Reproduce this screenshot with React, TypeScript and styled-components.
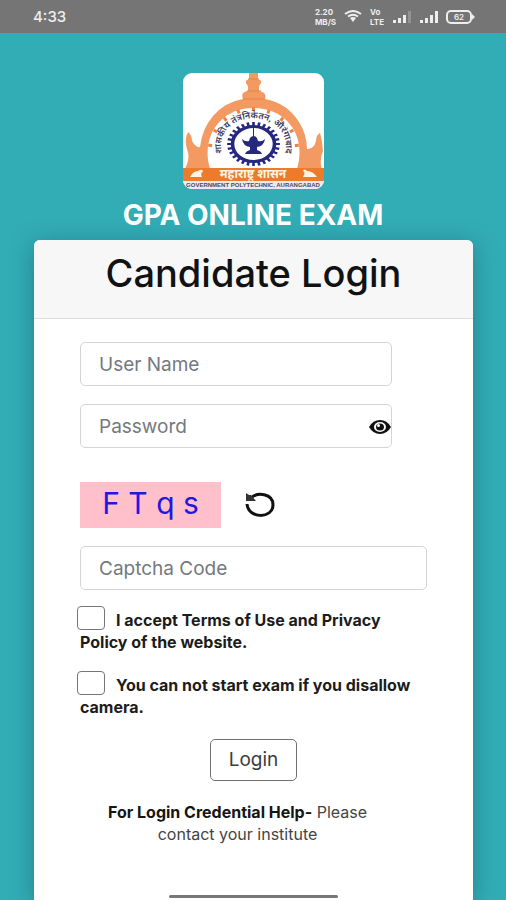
import React, { useState } from "react";
import styled, { createGlobalStyle } from "styled-components";

const GlobalStyle = createGlobalStyle`
  *, *::before, *::after { box-sizing: border-box; }
  body {
    margin: 0;
    background: #32adb6;
    color: #151515;
    font-family: Inter, Roboto, "Liberation Sans", sans-serif;
  }
`;

const Page = styled.div`
  min-height: 100vh;
  display: flex;
  flex-direction: column;
  background: #32adb6;
`;

const StatusBar = styled.div`
  height: 33px;
  padding: 0 31px 0 33px;
  display: flex;
  align-items: center;
  justify-content: space-between;
  background: #757575;
  color: #eeeeee;
`;

const Clock = styled.span`
  font-size: 15px;
  font-weight: 500;
`;

const StatusIcons = styled.div`
  display: flex;
  align-items: center;
  gap: 8px;
`;

const TinyStack = styled.span`
  display: flex;
  flex-direction: column;
  font-size: 8px;
  font-weight: 700;
  line-height: 10px;
`;

const Brand = styled.header`
  padding: 40px 0 7px;
  display: flex;
  flex-direction: column;
  align-items: center;
  gap: 8px;
`;

const BrandName = styled.h1`
  margin: 0;
  font-size: 28px;
  line-height: 36px;
  font-weight: 700;
  color: #fff;
`;

const Card = styled.main`
  flex: 1;
  margin: 0 33px 0 34px;
  display: flex;
  flex-direction: column;
  background: #fff;
  border-radius: 6px 6px 0 0;
  box-shadow: 0 4px 24px rgba(0, 50, 60, 0.35);
`;

const CardHeader = styled.div`
  height: 79px;
  padding-top: 11px;
  border-bottom: 1px solid #dcdcdc;
  border-radius: 6px 6px 0 0;
  background: #f7f7f7;
  text-align: center;
`;

const CardTitle = styled.h2`
  margin: 0;
  font-size: 38px;
  line-height: 44px;
  font-weight: 500;
  color: #101214;
`;

const Form = styled.form`
  padding: 23px 46px 56px;
  display: flex;
  flex-direction: column;
`;

const Field = styled.div<{ $width: string; $gap: number }>`
  position: relative;
  width: ${(p) => p.$width};
  margin-bottom: ${(p) => p.$gap}px;
`;

const TextInput = styled.input`
  display: block;
  width: 100%;
  height: 44px;
  padding: 0 18px;
  border: 1px solid #d3d5d8;
  border-radius: 5px;
  background: #fff;
  color: #212529;
  font: 400 19px/24px Inter, Roboto, sans-serif;
  &::placeholder { color: #74797e; opacity: 1; }
`;

const IconButton = styled.button`
  display: flex;
  padding: 0;
  border: 0;
  background: none;
  color: #111;
  cursor: pointer;
`;

const RevealButton = styled(IconButton)`
  position: absolute;
  right: 1px;
  top: 16px;
`;

const CaptchaRow = styled.div`
  display: flex;
  align-items: center;
  gap: 24px;
  margin-bottom: 18px;
`;

const CaptchaCode = styled.output`
  width: 141px;
  height: 46px;
  padding-bottom: 4px;
  display: flex;
  align-items: center;
  justify-content: center;
  background: #ffc0cb;
  color: #2418e0;
  font-size: 30px;
  white-space: pre;
`;

const Consent = styled.label`
  display: block;
  margin: 0 0 18px;
  font-size: 16px;
  line-height: 22px;
  font-weight: 700;
  color: #1c1c1c;
`;

const CheckBox = styled.input`
  appearance: none;
  width: 28px;
  height: 24px;
  margin: 0 11px 0 -3px;
  border: 1px solid #767676;
  border-radius: 4px;
  background: #fff;
  vertical-align: text-bottom;
  &:checked { background: #2f6fdb; }
`;

const LoginButton = styled.button`
  align-self: center;
  height: 42px;
  margin: 3px 0 20px;
  padding: 0 18px;
  border: 1px solid #6f7275;
  border-radius: 5px;
  background: #fff;
  color: #3a3d40;
  font: 400 19px/24px Inter, Roboto, sans-serif;
`;

const Help = styled.p`
  align-self: center;
  max-width: 306px;
  margin: 0;
  padding-right: 32px;
  text-align: center;
  font-size: 16px;
  line-height: 22px;
  color: #444;
  strong { color: #151515; font-weight: 700; }
`;

const HomeBar = styled.div`
  position: fixed;
  bottom: 2px;
  left: 50%;
  width: 169px;
  height: 3px;
  margin-left: -84px;
  border-radius: 2px;
  background: #777;
`;

const teeth = Array.from({ length: 28 }, (_, i) => (i * 360) / 28);
const rays = [-80, -60, -40, -20, 0, 20, 40, 60, 80];

const Logo = () => (
  <svg width="141" height="116" viewBox="0 0 141 116" role="img" aria-label="Government Polytechnic emblem">
    <defs>
      <clipPath id="plate"><rect width="141" height="116" rx="9" /></clipPath>
      <path id="motto" d="M39 82 C29 33 112 33 102 82" />
    </defs>
    <g clipPath="url(#plate)">
      <rect width="141" height="116" fill="#fff" />
      <path
        d="M66 0 H75 V6 Q81 8 76 13 V18 Q84 19 82 26 Q104 30 116 49 Q124 62 124 76 Q131 76 133 68 Q133 62 137 60 Q139 66 140 78 Q136 87 139 97 H1 Q8 86 4 76 Q1 66 5 59 Q9 62 9 68 Q13 75 17 74 Q19 56 30 43 Q42 29 60 26 Q57 19 65 18 V13 Q60 8 66 6 Z"
        fill="#f39a63"
      />
      <path d="M27 96 C17 62 39 35 70 35 C103 35 124 62 114 96 Z" fill="#fff" />
      <path d="M65 6 H76 M64 18 H78 M60 26 H82" stroke="#e9823e" />
      <g transform="translate(70.500 80)" stroke="#ee8440" strokeWidth="3">
        {rays.map((a) => (
          <path key={a} d="M0 -46 V-42" transform={`rotate(${a})`} />
        ))}
      </g>
      <text textAnchor="middle" fontFamily="Noto Sans Devanagari, Noto Sans, FreeSans, sans-serif" fontSize="9" fontWeight="600" fill="#3b3a62">
        <textPath href="#motto" startOffset="50%">शासकीय तंत्रनिकेतन, औरंगाबाद</textPath>
      </text>
      <g transform="translate(70.500 71) scale(1.2 1)" fill="none" stroke="#26277f">
        <circle r="17.500" strokeWidth="3" />
        <g strokeWidth="2.200">
          {teeth.map((a) => (
            <path key={a} d="M0 -18.500 V-22" transform={`rotate(${a})`} />
          ))}
        </g>
      </g>
      <g fill="#26277f">
        <path d="M70 54 h1 v10 h-1 Z" />
        <path d="M67 65 Q70.500 61 74 65 L75 68 Q79 69 82 66 Q81 73 74 74 L74 77 Q78 78 79 81 H62 Q63 78 67 77 V74 Q60 73 59 66 Q62 69 66 68 Z" />
      </g>
      <rect y="95" width="141" height="13" fill="#ec7c2c" />
      <path d="M7 104 Q10 98 15 98 Q20 95 20 99 Q17 99 19 104 Z M120 104 Q123 99 120 98 Q121 95 124 98 Q130 98 134 104 Z" fill="#fff3e4" />
      <text x="70" y="105" textAnchor="middle" fontFamily="Noto Sans Devanagari, Noto Sans, FreeSans, sans-serif" fontSize="12" fontWeight="700" fill="#fff3e4">महाराष्ट्र शासन</text>
      <rect y="108" width="141" height="8" fill="#eceaf0" />
      <text x="70" y="114" textAnchor="middle" fontFamily="Liberation Sans, sans-serif" fontSize="6" fontWeight="700" fill="#4b4a62">GOVERNMENT POLYTECHNIC, AURANGABAD</text>
    </g>
  </svg>
);

const Wifi = () => (
  <svg width="18" height="13" viewBox="0 0 18 13" fill="none" stroke="currentColor" strokeWidth="2">
    <path d="M1 4 Q9 -2 17 4" />
    <path d="M4 6.500 Q9 3 14 6.500" />
    <path d="M6 8 Q9 6 12 8 L9 12 Z" fill="currentColor" stroke="none" />
  </svg>
);

const Signal = ({ full }: { full: boolean }) => (
  <svg width="19" height="13" viewBox="0 0 19 13" fill="currentColor">
    <path d="M1 10 h3 v3 h-3 Z M6 8 h3 v5 h-3 Z M11 5 h3 v8 h-3 Z" />
    <path d="M16 1 h3 v12 h-3 Z" opacity={full ? 1 : 0.25} />
  </svg>
);

const Battery = () => (
  <svg width="29" height="14" viewBox="0 0 29 14">
    <rect x="1" y="1" width="24" height="12" rx="4" fill="none" stroke="currentColor" strokeWidth="2" />
    <path d="M26 4 L29 7 L26 10 Z" fill="currentColor" />
    <text x="13" y="10" textAnchor="middle" fontSize="8" fontWeight="600" fill="currentColor">62</text>
  </svg>
);

const Eye = () => (
  <svg width="22" height="14" viewBox="0 0 22 14">
    <path d="M0 7 Q4 0 11 0 Q18 0 22 7 Q18 14 11 14 Q4 14 0 7 Z" fill="currentColor" />
    <ellipse cx="11" cy="7" rx="6" ry="5" fill="#fff" />
    <ellipse cx="11" cy="7" rx="4" ry="3.500" fill="currentColor" />
    <circle cx="9.500" cy="5.500" r="1.500" fill="#fff" />
  </svg>
);

const Reload = () => (
  <svg width="30" height="26" viewBox="0 0 30 26">
    <path d="M6 6 C12 0 28 1 28 13 C28 27 3 27 2 12" fill="none" stroke="currentColor" strokeWidth="3" />
    <path d="M1 1 L4 3 L6 3 L11 9 H1 Z" fill="#333" />
  </svg>
);

export default function App() {
  const [visible, setVisible] = useState(false);
  return (
    <>
      <GlobalStyle />
      <Page>
        <StatusBar>
          <Clock>4:33</Clock>
          <StatusIcons>
            <TinyStack><span>2.20</span><span>MB/S</span></TinyStack>
            <Wifi />
            <TinyStack><span>Vo</span><span>LTE</span></TinyStack>
            <Signal full={false} />
            <Signal full />
            <Battery />
          </StatusIcons>
        </StatusBar>
        <Brand>
          <Logo />
          <BrandName>GPA ONLINE EXAM</BrandName>
        </Brand>
        <Card>
          <CardHeader>
            <CardTitle>Candidate Login</CardTitle>
          </CardHeader>
          <Form onSubmit={(e) => e.preventDefault()}>
            <Field $width="90%" $gap={18}>
              <TextInput aria-label="User Name" placeholder="User Name" />
            </Field>
            <Field $width="90%" $gap={34}>
              <TextInput aria-label="Password" placeholder="Password" type={visible ? "text" : "password"} />
              <RevealButton type="button" aria-label="Show password" onClick={() => setVisible(!visible)}>
                <Eye />
              </RevealButton>
            </Field>
            <CaptchaRow>
              <CaptchaCode>F T q s</CaptchaCode>
              <IconButton type="button" aria-label="Reload captcha"><Reload /></IconButton>
            </CaptchaRow>
            <Field $width="100%" $gap={16}>
              <TextInput aria-label="Captcha Code" placeholder="Captcha Code" />
            </Field>
            <Consent>
              <CheckBox type="checkbox" />I accept Terms of Use and Privacy Policy of the website.
            </Consent>
            <Consent>
              <CheckBox type="checkbox" />You can not start exam if you disallow camera.
            </Consent>
            <LoginButton type="submit">Login</LoginButton>
            <Help><strong>For Login Credential Help-</strong> Please contact your institute</Help>
          </Form>
        </Card>
      </Page>
      <HomeBar />
    </>
  );
}
